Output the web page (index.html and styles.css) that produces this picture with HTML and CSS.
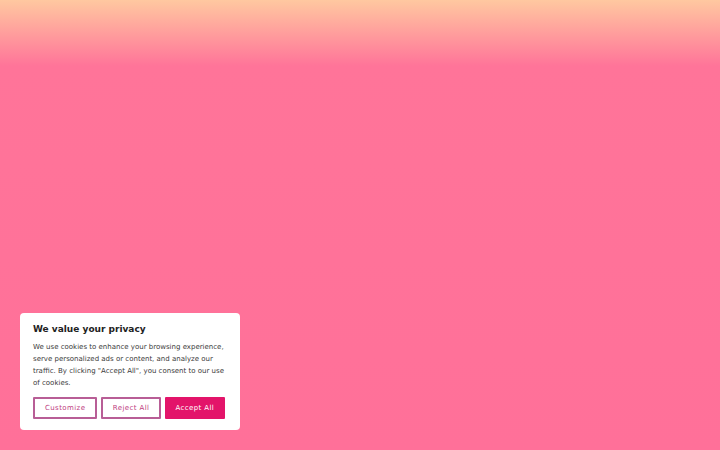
FILE: index.html
```html
<!DOCTYPE html>
<html lang="en">
<head>
<meta charset="utf-8">
<title>Privacy</title>
<link rel="stylesheet" href="styles.css">
</head>
<body>
<div class="page">
  <div class="banner">
    <h2 class="title">We value your privacy</h2>
    <p class="text">We use cookies to enhance your browsing experience, serve personalized ads or content, and analyze our traffic. By clicking "Accept All", you consent to our use of cookies.</p>
    <div class="actions">
      <button class="btn btn-outline btn-wide">Customize</button>
      <button class="btn btn-outline">Reject All</button>
      <button class="btn btn-primary">Accept All</button>
    </div>
  </div>
</div>
</body>
</html>
```
FILE: styles.css
```css
html, body {
  margin: 0;
  padding: 0;
  height: 100%;
}
body {
  font-family: "DejaVu Sans", sans-serif;
  background: linear-gradient(to bottom, #ffc8a0 0px, #ff7499 66px, #ff7099 100%);
  background-color: #ff7099;
}
.page {
  height: 450px;
  display: flex;
  flex-direction: column;
  justify-content: flex-end;
  padding: 0 20px 20px;
  box-sizing: border-box;
}
.banner {
  width: 220px;
  box-sizing: border-box;
  background: #fff;
  border-radius: 4px;
  padding: 10px 12px 11px 13px;
}
.title {
  margin: 0 0 6px;
  font-size: 9px;
  font-weight: bold;
  color: #222;
  line-height: 12px;
}
.text {
  margin: 0 0 8px;
  font-size: 7px;
  line-height: 12px;
  color: #3a3a3a;
}
.actions {
  display: flex;
  gap: 4px;
}
.btn {
  font-family: "DejaVu Sans", sans-serif;
  font-size: 7px;
  letter-spacing: 0.4px;
  height: 22px;
  border-radius: 1px;
  padding: 0 9.5px;
  white-space: nowrap;
  cursor: pointer;
}
.btn-wide {
  padding: 0 10px;
}
.btn-outline {
  background: #fff;
  border: 2px solid #b85e96;
  color: #c0407f;
}
.btn-primary {
  background: #e3146a;
  border: 2px solid #e3146a;
  color: #fff;
  padding: 0 8.5px;
}
```
